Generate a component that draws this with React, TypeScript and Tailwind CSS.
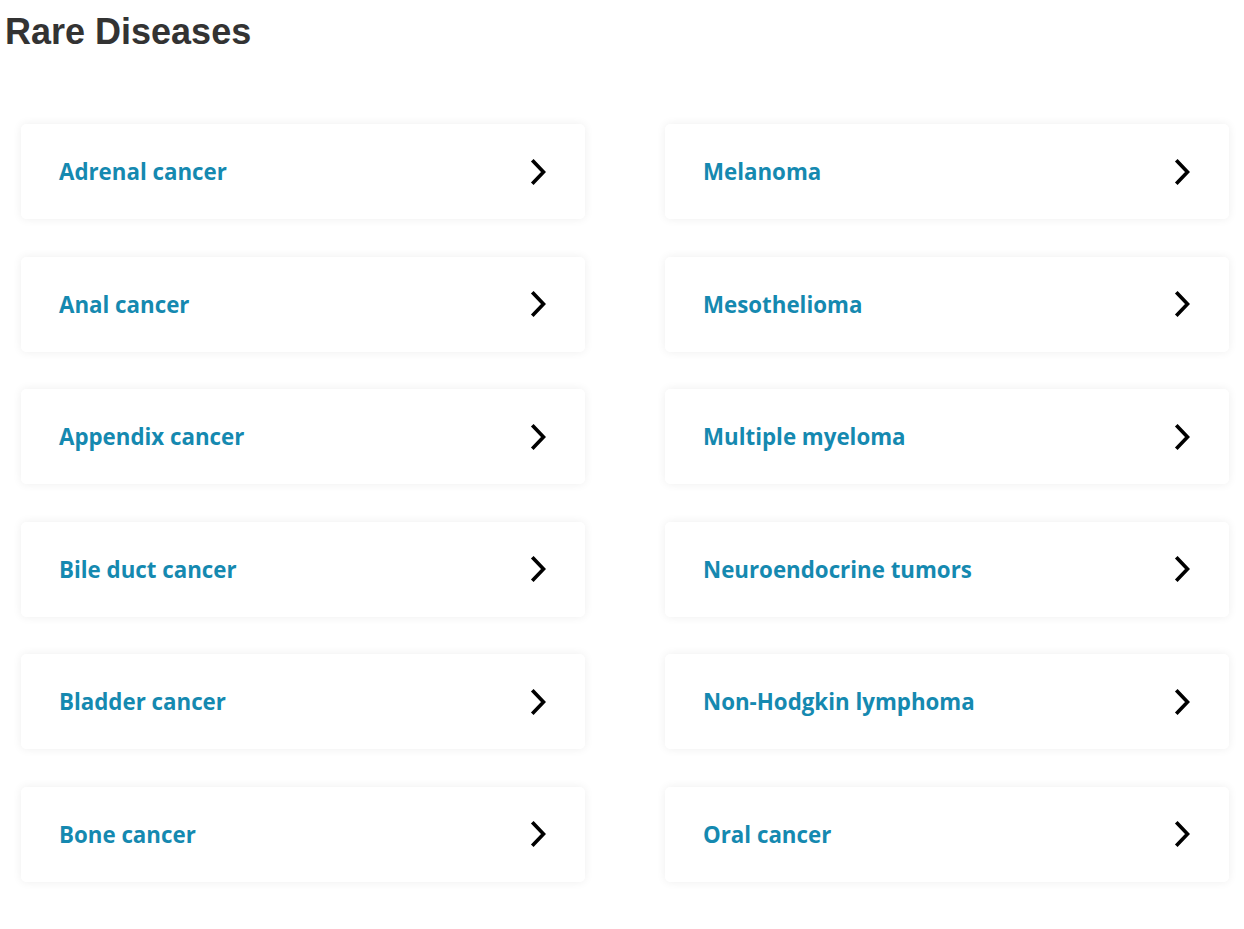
import React from "react";

const left = ["Adrenal cancer", "Anal cancer", "Appendix cancer", "Bile duct cancer", "Bladder cancer", "Bone cancer"];
const right = ["Melanoma", "Mesothelioma", "Multiple myeloma", "Neuroendocrine tumors", "Non-Hodgkin lymphoma", "Oral cancer"];

function Chevron() {
  return (
    <svg width="18" height="28" viewBox="0 0 18 28" fill="none">
      <path d="M3.5 3.5 L13.5 14 L3.5 24.5" stroke="#000" strokeWidth="3.6" strokeLinecap="square" strokeLinejoin="miter" />
    </svg>
  );
}

function Card({ label }: { label: string }) {
  return (
    <a className="flex h-[95px] items-center justify-between rounded-[5px] bg-white pl-[38px] pr-[37px] shadow-[0_0_10px_rgba(0,0,0,0.07)]">
      <span className="text-[22.3px] font-bold text-[#1589b0]" style={{ fontFamily: '"Open Sans", sans-serif' }}>
        {label}
      </span>
      <Chevron />
    </a>
  );
}

export default function App() {
  const items: string[] = [];
  for (let i = 0; i < left.length; i++) {
    items.push(left[i], right[i]);
  }
  return (
    <div className="min-h-[929px] w-[1244px] bg-white">
      <h2 className="pl-[5px] pt-[11px] text-[36px] font-bold leading-[1.15] text-[#333]" style={{ fontFamily: '"Liberation Sans", Arial, sans-serif' }}>
        Rare Diseases
      </h2>
      <div className="mt-[72px] grid grid-cols-[564px_564px] gap-x-[80px] gap-y-[37.5px] pl-[21px]">
        {items.map((t) => (
          <Card key={t} label={t} />
        ))}
      </div>
    </div>
  );
}
